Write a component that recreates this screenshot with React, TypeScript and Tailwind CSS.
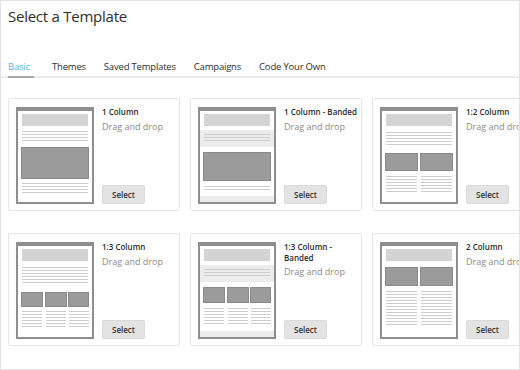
import React from "react";

type Kind = "one" | "oneBanded" | "oneTwo" | "oneThree" | "oneThreeBanded" | "two";

interface Template {
  name: string;
  kind: Kind;
}

const templates: Template[] = [
  { name: "1 Column", kind: "one" },
  { name: "1 Column - Banded", kind: "oneBanded" },
  { name: "1:2 Column", kind: "oneTwo" },
  { name: "1:3 Column", kind: "oneThree" },
  { name: "1:3 Column - Banded", kind: "oneThreeBanded" },
  { name: "2 Column", kind: "two" },
];

const tabs = ["Basic", "Themes", "Saved Templates", "Campaigns", "Code Your Own"];

// fake text lines inside the thumbnail
function Lines({ ys, cols }: { ys: number[]; cols: [number, number][] }) {
  return (
    <>
      {cols.map(([x, w]) =>
        ys.map((y) => <rect key={`${x}-${y}`} x={x} y={y} width={w} height={1} fill="#cdcdcd" />)
      )}
    </>
  );
}

function Dark({ x, y, w, h }: { x: number; y: number; w: number; h: number }) {
  return <rect x={x + 0.5} y={y + 0.5} width={w - 1} height={h - 1} fill="#9b9b9b" stroke="#8a8a8a" />;
}

function Band({ y, h }: { y: number; h: number }) {
  return <rect x={2} y={y} width={74} height={h} fill="#ececec" />;
}

const full: [number, number][] = [[6, 66]];
const halves: [number, number][] = [[6, 31], [41, 31]];
const thirds: [number, number][] = [[6, 20], [30, 20], [53, 20]];

function Thumb({ kind }: { kind: Kind }) {
  return (
    <svg width="78" height="97" viewBox="0 0 78 97" className="shrink-0 block">
      <rect x={0} y={0} width={78} height={97} fill="#8e8e8e" />
      <rect x={2} y={4} width={74} height={91} fill="#ffffff" />
      <rect x={6} y={7} width={66} height={12} fill="#d4d4d4" />
      {kind === "one" && (
        <>
          <Lines ys={[24, 27, 30, 33]} cols={full} />
          <Dark x={5} y={40} w={68} h={32} />
          <Lines ys={[76, 79, 82, 85]} cols={full} />
        </>
      )}
      {kind === "oneBanded" && (
        <>
          <Band y={23} h={17} />
          <Lines ys={[27, 30, 33]} cols={full} />
          <Dark x={5} y={45} w={68} h={29} />
          <Lines ys={[79, 82]} cols={full} />
          <Band y={89} h={6} />
        </>
      )}
      {kind === "oneTwo" && (
        <>
          <Lines ys={[25, 28, 31, 34, 37]} cols={full} />
          <Dark x={5} y={46} w={33} h={18} />
          <Dark x={40} y={46} w={33} h={18} />
          <Lines ys={[69, 72, 75, 78, 81, 84]} cols={halves} />
        </>
      )}
      {kind === "oneThree" && (
        <>
          <Lines ys={[25, 28, 31, 34, 37, 40]} cols={full} />
          <Dark x={5} y={50} w={22} h={15} />
          <Dark x={29} y={50} w={22} h={15} />
          <Dark x={52} y={50} w={21} h={15} />
          <Lines ys={[69, 72, 75, 78, 81, 84]} cols={thirds} />
        </>
      )}
      {kind === "oneThreeBanded" && (
        <>
          <Band y={23} h={17} />
          <Lines ys={[27, 30, 33]} cols={full} />
          <Dark x={5} y={45} w={22} h={16} />
          <Dark x={29} y={45} w={22} h={16} />
          <Dark x={52} y={45} w={21} h={16} />
          <Lines ys={[66, 69, 72, 75, 78, 81]} cols={thirds} />
          <Band y={89} h={6} />
        </>
      )}
      {kind === "two" && (
        <>
          <Dark x={5} y={25} w={33} h={19} />
          <Dark x={40} y={25} w={33} h={19} />
          <Lines ys={[49, 52, 55, 58, 61, 64, 67, 70, 73, 76, 79, 82]} cols={halves} />
        </>
      )}
    </svg>
  );
}

function TemplateCard({ template }: { template: Template }) {
  return (
    <div className="w-[172px] h-[113px] shrink-0 flex border border-[#e6e6e6] rounded-[2px] bg-white pl-[7px] pt-[8px] pb-[6px]">
      <Thumb kind={template.kind} />
      <div className="ml-[8px] w-[74px] flex flex-col">
        <p className="text-[8px] leading-[10.5px] font-semibold text-[#2b2b2b]">{template.name}</p>
        <p className="mt-[4px] text-[9px] leading-[10.5px] text-[#8a8a8a] whitespace-nowrap">Drag and drop</p>
        <button className="mt-auto w-[43px] h-[19px] bg-[#e3e3e3] border border-[#dadada] rounded-[2px] text-[8px] font-semibold text-[#333]">
          Select
        </button>
      </div>
    </div>
  );
}

export default function App() {
  return (
    <div className="w-[520px] h-[370px] overflow-hidden bg-white border border-[#e3e3e3] font-['Open_Sans',sans-serif]">
      <h1 className="ml-[7px] mt-[4px] text-[15px] leading-[22px] tracking-[-0.25px] font-normal text-[#2e2e2e]">
        Select a Template
      </h1>

      <div className="mt-[33px] flex gap-[18px] border-b-2 border-[#ececec] pl-[7px]">
        {tabs.map((tab, i) => (
          <div
            key={tab}
            className={
              i === 0
                ? "w-[26px] -mb-[2px] pb-[2px] border-b-2 border-[#a8a8a8] text-[9.5px] leading-[14px] tracking-[-0.2px] text-[#52bad5]"
                : "pb-[2px] text-[9.5px] leading-[14px] tracking-[-0.2px] text-[#2e2e2e]"
            }
          >
            {tab}
          </div>
        ))}
      </div>

      <div className="mt-[20px] pl-[7px] flex flex-col gap-[22px]">
        <div className="flex gap-[10px]">
          {templates.slice(0, 3).map((t) => (
            <TemplateCard key={t.name} template={t} />
          ))}
        </div>
        <div className="flex gap-[10px]">
          {templates.slice(3).map((t) => (
            <TemplateCard key={t.name} template={t} />
          ))}
        </div>
      </div>
    </div>
  );
}
